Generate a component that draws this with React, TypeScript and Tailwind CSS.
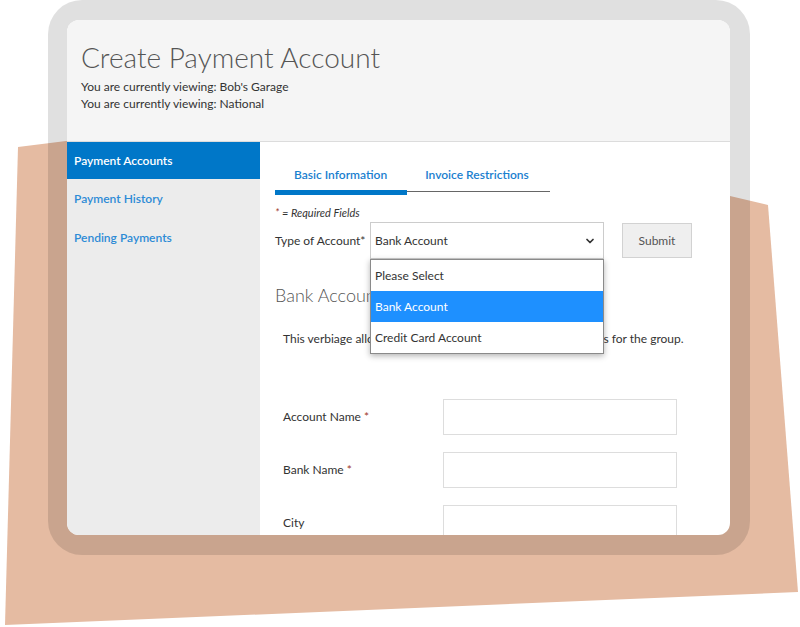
import { ChevronDown } from "lucide-react";

const SIDE_ITEMS = [
  { label: "Payment Accounts", active: true },
  { label: "Payment History", active: false },
  { label: "Pending Payments", active: false },
];

const OPTIONS = ["Please Select", "Bank Account", "Credit Card Account"];

const FIELDS = [
  { label: "Account Name", required: true },
  { label: "Bank Name", required: true },
  { label: "City", required: false },
];

export default function App() {
  return (
    <div className="relative h-[627px] w-[800px] overflow-hidden bg-white font-['Lato',sans-serif] text-[#333]">
      {/* backdrop shape */}
      <svg className="absolute inset-0" width="800" height="627" viewBox="0 0 800 627">
        <polygon points="18,147 66,141 730,196 768,205 798,592 5,625" fill="#e5bba2" />
      </svg>

      {/* device frame */}
      <div className="absolute left-[48px] top-0 h-[555px] w-[702px] rounded-[34px] bg-black/[0.12] pb-[20px] pl-[19px] pr-[20px] pt-[20px]">
        <div className="flex h-full flex-col overflow-hidden rounded-[12px] bg-white">
          {/* header */}
          <div className="h-[122px] shrink-0 border-b border-[#dcdcdc] bg-[#f5f5f5] px-[14px] pt-[20px]">
            <h1 className="text-[28px] font-light leading-[34px] text-[#555]">Create Payment Account</h1>
            <p className="mt-[4px] text-[12px] leading-[17px]">You are currently viewing: Bob's Garage</p>
            <p className="text-[12px] leading-[17px]">You are currently viewing: National</p>
          </div>

          <div className="flex min-h-0 flex-1">
            {/* sidebar */}
            <nav className="w-[193px] shrink-0 bg-[#ececec]">
              {SIDE_ITEMS.map((item) => (
                <div
                  key={item.label}
                  className={
                    item.active
                      ? "flex h-[37px] items-center bg-[#0077c8] px-[7px] text-[12px] font-semibold text-white"
                      : "flex h-[39px] items-center px-[7px] text-[12px] font-semibold text-[#2d8bd6]"
                  }
                >
                  {item.label}
                </div>
              ))}
            </nav>

            {/* main */}
            <div className="flex-1 pl-[15px]">
              <div className="relative mt-[24px] flex w-[275px] border-b border-[#666]">
                <div className="relative px-[19px] pb-[7px] text-[12px] font-semibold text-[#1a80cf]">
                  Basic Information
                  <span className="absolute bottom-[-4px] left-0 h-[5px] w-[132px] bg-[#0077c8]" />
                </div>
                <div className="px-[19px] pb-[7px] text-[12px] font-semibold text-[#1a80cf]">Invoice Restrictions</div>
              </div>

              <p className="mt-[14px] text-[11px] italic leading-[14px]">
                <span className="text-[#a0392b]">*</span> = Required Fields
              </p>

              <div className="mt-[2px] flex items-center">
                <span className="w-[95px] text-[12px]">Type of Account*</span>
                <div className="relative">
                  <div className="flex h-[37px] w-[234px] items-center justify-between border border-[#ccc] bg-white pl-[4px] pr-[7px] text-[12px]">
                    Bank Account
                    <ChevronDown size={12} strokeWidth={3.5} className="text-[#333]" />
                  </div>
                  <ul className="absolute left-0 top-full z-10 w-[234px] border border-[#8a8a8a] bg-white text-[12px] shadow-[0_2px_6px_rgba(0,0,0,0.3)]">
                    {OPTIONS.map((opt) => (
                      <li
                        key={opt}
                        className={
                          opt === "Bank Account"
                            ? "flex h-[31px] items-center bg-[#1e90ff] px-[4px] text-white"
                            : "flex h-[31px] items-center px-[4px]"
                        }
                      >
                        {opt}
                      </li>
                    ))}
                  </ul>
                </div>
                <button className="ml-[18px] h-[35px] w-[70px] border border-[#d2d2d2] bg-[#efefef] text-[12px] text-[#555]">
                  Submit
                </button>
              </div>

              <h2 className="mt-[24px] text-[18px] font-light leading-[24px] text-[#555]">Bank Account Information</h2>

              <p className="mt-[23px] pl-[8px] text-[12px]">
                This verbiage allows you to set up and view payment accounts for the group.
              </p>

              <div className="mt-[51px] flex flex-col gap-[17px] pl-[8px]">
                {FIELDS.map((f) => (
                  <div key={f.label} className="flex items-center">
                    <span className="w-[160px] text-[12px]">
                      {f.label}
                      {f.required && <span className="text-[#a0392b]"> *</span>}
                    </span>
                    <div className="h-[36px] w-[234px] border border-[#ddd] bg-white" />
                  </div>
                ))}
              </div>
            </div>
          </div>
        </div>
      </div>
    </div>
  );
}
